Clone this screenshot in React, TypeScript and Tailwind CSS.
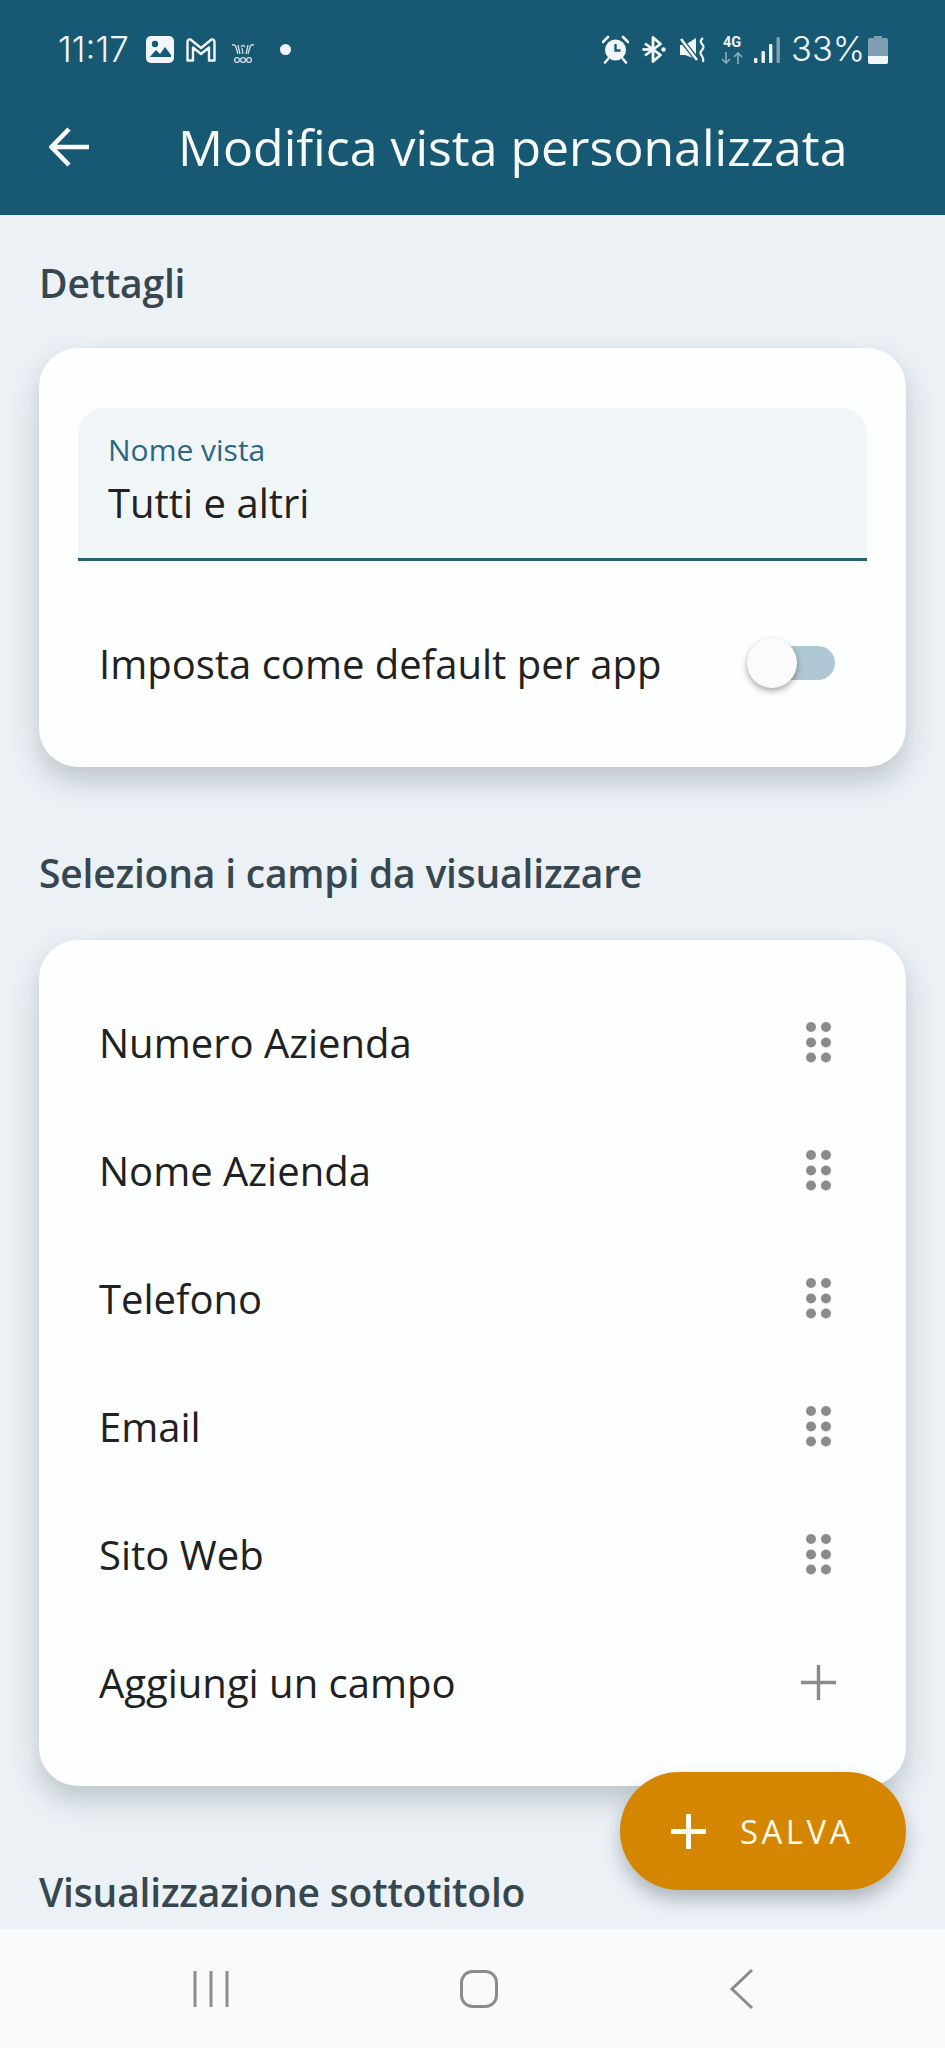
import React from "react";

const W = "#f2f6f8";

function StatusLeft() {
  return (
    <div className="flex items-center">
      <span className="text-[35px] leading-none text-[#eef3f6] font-['Inter',sans-serif] font-light w-[88px] whitespace-nowrap">11:17</span>
      <svg width="29" height="28" viewBox="0 0 29 28" className="shrink-0">
        <rect x="0" y="0" width="28" height="27" rx="5" fill={W} />
        <circle cx="9" cy="8" r="3.2" fill="#175873" />
        <path d="M3 22 L10 14 L14 18 L19 11 L25 19 L25 21 L3 21Z" fill="#175873" />
      </svg>
      <svg width="32" height="26" viewBox="0 0 32 26" className="ml-[10px] shrink-0">
        <path d="M2.5 23.5 V5 Q2.5 2 5.5 2.5 L16 11 L26.5 2.5 Q29.5 2 29.5 5 V23.5 H24 V10.5 L16 17 L8 10.5 V23.5Z" fill="none" stroke={W} strokeWidth="2.4" strokeLinejoin="round" />
      </svg>
      <svg width="24" height="21" viewBox="0 0 24 21" className="ml-[14px] mt-[8px] shrink-0">
        <path d="M1 2 Q4 1 5 4 L7 11 M7 2 L9 11 M12 2 L10 4 M12 2 L14 4 M11 5 L12 11 M17 2 L15 11 M23 2 Q20 1 19 4 L17 11" fill="none" stroke="#c8d6dd" strokeWidth="1.4" />
        <circle cx="6" cy="17" r="2.4" fill="none" stroke="#c8d6dd" strokeWidth="1.4" />
        <circle cx="12" cy="17" r="2.4" fill="none" stroke="#c8d6dd" strokeWidth="1.4" />
        <circle cx="18" cy="17" r="2.4" fill="none" stroke="#c8d6dd" strokeWidth="1.4" />
      </svg>
      <div className="ml-[25px] w-[11px] h-[11px] rounded-full bg-[#f2f6f8]" />
    </div>
  );
}

function StatusRight() {
  return (
    <div className="flex items-center">
      <svg width="27" height="29" viewBox="0 0 27 29" className="shrink-0">
        <circle cx="13.5" cy="15" r="10.5" fill={W} />
        <path d="M13.5 9 V15.5 H18.5" fill="none" stroke="#175873" strokeWidth="2.4" />
        <path d="M1 7 L6 2 M26 7 L21 2" stroke={W} strokeWidth="2.6" strokeLinecap="round" />
        <path d="M6 24 L3 27.5 M21 24 L24 27.5" stroke={W} strokeWidth="2.6" strokeLinecap="round" />
      </svg>
      <svg width="24" height="27" viewBox="0 0 24 27" className="ml-[13px] shrink-0">
        <path d="M3 7.5 L18.5 19 L11 25.5 V1.5 L18.5 8 L3 19.5" fill="none" stroke={W} strokeWidth="2.8" strokeLinejoin="round" />
        <path d="M0.5 13.5 H9" stroke={W} strokeWidth="2.8" />
        <circle cx="21.5" cy="13.5" r="2.2" fill={W} />
      </svg>
      <svg width="28" height="26" viewBox="0 0 28 26" className="ml-[13px] shrink-0">
        <path d="M1 8 H6 L17 1 V22 L6 18 H1Z" fill={W} />
        <path d="M1 1 L19 24" stroke="#175873" strokeWidth="5" />
        <path d="M2 2 L18 23" stroke={W} strokeWidth="2.6" />
        <path d="M24 1 Q20 4 23 7 Q26 10 23 13 Q20 16 23 19 Q25 22 24 25" fill="none" stroke={W} strokeWidth="2.2" />
      </svg>
      <div className="ml-[13px] w-[24px] h-[28px] flex flex-col items-center shrink-0">
        <span className="text-[14.5px] leading-[13px] font-bold text-[#f2f6f8] font-['Roboto',sans-serif]">4G</span>
        <svg width="24" height="12" viewBox="0 0 24 12" className="mt-[3px]">
          <path d="M6 0 V11 M2 7 L6 11 L10 7" fill="none" stroke="#8fb0bf" strokeWidth="1.6" />
          <path d="M18 12 V1 M14 5 L18 1 L22 5" fill="none" stroke="#8fb0bf" strokeWidth="1.6" />
        </svg>
      </div>
      <svg width="26" height="28" viewBox="0 0 26 28" className="ml-[10px] shrink-0">
        <rect x="0" y="22" width="3.4" height="5" rx="1" fill={W} />
        <rect x="7.5" y="15" width="3.4" height="12" rx="1" fill={W} />
        <rect x="15" y="8" width="3.4" height="19" rx="1" fill={W} />
        <rect x="22.5" y="1" width="3.4" height="26" rx="1" fill="#7ea0b0" />
      </svg>
      <span className="ml-[11px] w-[71px] text-[34.5px] leading-none text-[#f2f6f8] font-['Inter',sans-serif] font-light whitespace-nowrap">33%</span>
      <svg width="20" height="28" viewBox="0 0 20 28" className="ml-[6px] shrink-0">
        <path d="M6 0 H14 V2 H18 Q20 2 20 4 V26 Q20 28 18 28 H2 Q0 28 0 26 V4 Q0 2 2 2 H6Z" fill="#7d9fb0" />
        <path d="M0 20 H20 V26 Q20 28 18 28 H2 Q0 28 0 26Z" fill={W} />
      </svg>
    </div>
  );
}

function Dots() {
  return (
    <svg width="25" height="41" viewBox="0 0 25 41" className="shrink-0">
      {[5, 20.5, 35.5].map((y) =>
        [5, 20].map((x) => <circle key={`${x}-${y}`} cx={x} cy={y} r="5" fill="#8b8b8b" />)
      )}
    </svg>
  );
}

function Row({ label, icon }: { label: string; icon?: React.ReactNode }) {
  return (
    <div className="h-[128px] flex items-center justify-between pl-[60px] pr-[75px]">
      <span className="mt-[1px] text-[#212121] text-[40px] leading-none">{label}</span>
      {icon ?? <Dots />}
    </div>
  );
}

export default function App() {
  return (
    <div className="relative w-[945px] h-[2048px] overflow-hidden flex flex-col bg-[#ebf1f5] font-['Open_Sans',sans-serif]">
      <header className="h-[215px] shrink-0 bg-[#175873] flex flex-col">
        <div className="h-[99px] flex items-center justify-between pl-[58px] pr-[57px]">
          <StatusLeft />
          <StatusRight />
        </div>
        <div className="flex items-center pl-[49px] h-[96px]">
          <svg width="41" height="40" viewBox="0 0 41 40" className="shrink-0">
            <path d="M40 20 H3 M20 2 L2.5 20 L20 38" fill="none" stroke="#fbfdfe" strokeWidth="4.6" />
          </svg>
          <h1 className="ml-[88px] text-[#f8fbfc] text-[50px] leading-none whitespace-nowrap font-normal">Modifica vista personalizzata</h1>
        </div>
      </header>

      <main className="flex-1 overflow-hidden px-[39px]">
        <h2 className="mt-[45px] h-[44px] flex items-center text-[#37474f] text-[39px] font-semibold leading-none tracking-[-0.2px]">Dettagli</h2>
        <section className="mt-[44px] h-[419px] rounded-[39px] bg-[#fdfefe] shadow-[0_14px_28px_rgba(70,85,95,0.28)] px-[39px] pt-[60px]">
          <div className="h-[153px] rounded-t-[26px] bg-[#f0f5f8] border-b-[3px] border-[#2b5f75] pl-[30px] pt-[24px]">
            <div className="text-[#2d6680] text-[30px] leading-[36px]">Nome vista</div>
            <div className="mt-[10px] text-[#212121] text-[40px] leading-[50px]">Tutti e altri</div>
          </div>
          <div className="mt-[50px] h-[104px] flex items-center justify-between pl-[21px] pr-[32px]">
            <span className="mt-[1px] text-[#212121] text-[40px] leading-none">Imposta come default per app</span>
            <div className="relative w-[88px] h-[34px] rounded-full">
              <div className="absolute right-0 top-0 w-[66px] h-[34px] rounded-full bg-[#afc8d3]" />
              <div className="absolute left-0 top-[-8px] w-[50px] h-[50px] rounded-full bg-[#fbfbfb] shadow-[0_3px_6px_rgba(0,0,0,0.35)]" />
            </div>
          </div>
        </section>

        <h2 className="mt-[83px] h-[44px] flex items-center text-[#37474f] text-[39px] font-semibold leading-none tracking-[-0.2px]">Seleziona i campi da visualizzare</h2>
        <section className="mt-[46px] h-[846px] rounded-[39px] bg-[#fdfefe] shadow-[0_14px_28px_rgba(70,85,95,0.28)] pt-[38px]">
          <Row label="Numero Azienda" />
          <Row label="Nome Azienda" />
          <Row label="Telefono" />
          <Row label="Email" />
          <Row label="Sito Web" />
          <Row
            label="Aggiungi un campo"
            icon={
              <svg width="37" height="37" viewBox="0 0 37 37" className="shrink-0 mr-[-6px]">
                <path d="M18.5 1 V36 M1 18.5 H36" stroke="#8a8a8a" strokeWidth="3.4" />
              </svg>
            }
          />
        </section>

        <h2 className="mt-[83px] h-[44px] flex items-center text-[#37474f] text-[39px] font-semibold leading-none tracking-[-0.2px]">Visualizzazione sottotitolo</h2>
      </main>

      <nav className="h-[119px] shrink-0 bg-[#f9fafc] flex items-center justify-between pl-[193px] pr-[190px]">
        <svg width="36" height="38" viewBox="0 0 36 38">
          <path d="M2 1 V37 M18 1 V37 M34 1 V37" stroke="#8c8c8c" strokeWidth="3" />
        </svg>
        <svg width="38" height="38" viewBox="0 0 38 38">
          <rect x="1.5" y="1.5" width="35" height="35" rx="11" fill="none" stroke="#8c8c8c" strokeWidth="3" />
        </svg>
        <svg width="26" height="42" viewBox="0 0 26 42">
          <path d="M23 2 L3 21 L23 40" fill="none" stroke="#8c8c8c" strokeWidth="3" />
        </svg>
      </nav>

      <button className="absolute left-[620px] top-[1772px] w-[286px] h-[118px] rounded-full bg-[#d48600] shadow-[0_10px_18px_rgba(50,60,70,0.32)] flex items-center pl-[51px]">
        <svg width="35" height="35" viewBox="0 0 35 35" className="shrink-0">
          <path d="M17.5 0 V35 M0 17.5 H35" stroke="#fffdf6" strokeWidth="5" />
        </svg>
        <span className="ml-[34px] text-[#fff8e8] text-[33px] leading-none tracking-[3.4px]">SALVA</span>
      </button>
    </div>
  );
}
